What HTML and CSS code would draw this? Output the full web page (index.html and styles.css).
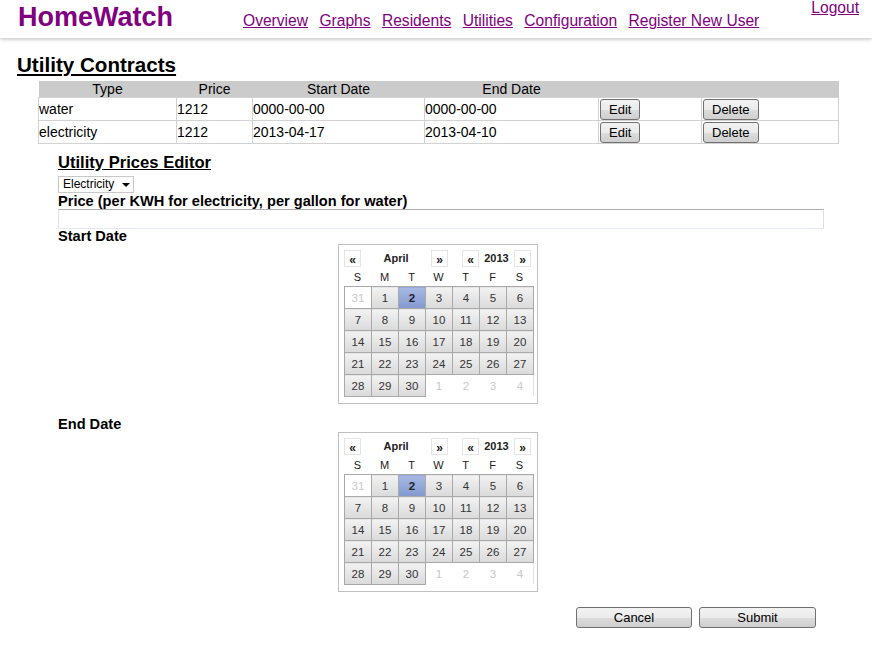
FILE: index.html
```html
<!DOCTYPE html>
<html>
<head>
<meta charset="utf-8">
<title>HomeWatch - Utilities</title>
<link rel="stylesheet" href="styles.css">
</head>
<body>
<header class="topbar">
  <div class="brand">HomeWatch</div>
  <nav class="nav">
    <a href="#">Overview</a>
    <a href="#">Graphs</a>
    <a href="#">Residents</a>
    <a href="#">Utilities</a>
    <a href="#">Configuration</a>
    <a href="#">Register New User</a>
  </nav>
  <a class="logout" href="#">Logout</a>
</header>

<main class="page">
  <h1 class="page-title">Utility Contracts</h1>
  <table class="contracts">
    <colgroup>
      <col class="c-type"><col class="c-price"><col class="c-start"><col class="c-end"><col class="c-edit"><col class="c-del">
    </colgroup>
    <thead>
      <tr><th>Type</th><th>Price</th><th>Start Date</th><th>End Date</th><th></th><th></th></tr>
    </thead>
    <tbody>
      <tr>
        <td>water</td><td>1212</td><td>0000-00-00</td><td>0000-00-00</td>
        <td><button class="btn">Edit</button></td><td><button class="btn">Delete</button></td>
      </tr>
      <tr>
        <td>electricity</td><td>1212</td><td>2013-04-17</td><td>2013-04-10</td>
        <td><button class="btn">Edit</button></td><td><button class="btn">Delete</button></td>
      </tr>
    </tbody>
  </table>

  <section class="editor">
    <h2 class="editor-title">Utility Prices Editor</h2>
    <div class="select"><span>Electricity</span><svg class="select-arrow" width="8" height="4" viewBox="0 0 8 4"><path d="M0 0H8L4 4Z" fill="#000"/></svg></div>
    <div class="field-label price-label">Price (per KWH for electricity, per gallon for water)</div>
    <input class="text-input" type="text">
    <div class="field-label">Start Date</div>

    <div class="calendar">
      <div class="cal-nav">
        <span class="cal-btn">«</span>
        <span class="cal-month">April</span>
        <span class="cal-btn">»</span>
        <span class="cal-spacer"></span>
        <span class="cal-btn">«</span>
        <span class="cal-year">2013</span>
        <span class="cal-btn">»</span>
      </div>
      <div class="cal-dow"><span>S</span><span>M</span><span>T</span><span>W</span><span>T</span><span>F</span><span>S</span></div>
      <table class="cal-grid">
        <tr><td class="other">31</td><td>1</td><td class="sel">2</td><td>3</td><td>4</td><td>5</td><td>6</td></tr>
        <tr><td>7</td><td>8</td><td>9</td><td>10</td><td>11</td><td>12</td><td>13</td></tr>
        <tr><td>14</td><td>15</td><td>16</td><td>17</td><td>18</td><td>19</td><td>20</td></tr>
        <tr><td>21</td><td>22</td><td>23</td><td>24</td><td>25</td><td>26</td><td>27</td></tr>
        <tr><td>28</td><td>29</td><td>30</td><td class="other next">1</td><td class="other next">2</td><td class="other next">3</td><td class="other next last">4</td></tr>
      </table>
    </div>

    <div class="field-label end-label">End Date</div>

    <div class="calendar">
      <div class="cal-nav">
        <span class="cal-btn">«</span>
        <span class="cal-month">April</span>
        <span class="cal-btn">»</span>
        <span class="cal-spacer"></span>
        <span class="cal-btn">«</span>
        <span class="cal-year">2013</span>
        <span class="cal-btn">»</span>
      </div>
      <div class="cal-dow"><span>S</span><span>M</span><span>T</span><span>W</span><span>T</span><span>F</span><span>S</span></div>
      <table class="cal-grid">
        <tr><td class="other">31</td><td>1</td><td class="sel">2</td><td>3</td><td>4</td><td>5</td><td>6</td></tr>
        <tr><td>7</td><td>8</td><td>9</td><td>10</td><td>11</td><td>12</td><td>13</td></tr>
        <tr><td>14</td><td>15</td><td>16</td><td>17</td><td>18</td><td>19</td><td>20</td></tr>
        <tr><td>21</td><td>22</td><td>23</td><td>24</td><td>25</td><td>26</td><td>27</td></tr>
        <tr><td>28</td><td>29</td><td>30</td><td class="other next">1</td><td class="other next">2</td><td class="other next">3</td><td class="other next last">4</td></tr>
      </table>
    </div>

    <div class="actions">
      <button class="btn btn-cancel">Cancel</button>
      <button class="btn btn-submit">Submit</button>
    </div>
  </section>
</main>
</body>
</html>
```

FILE: styles.css
```css
* { box-sizing: border-box; }

body {
  margin: 0;
  font-family: "Liberation Sans", Arial, sans-serif;
  color: #000;
  background: #fff;
}

/* ---------- top bar ---------- */
.topbar {
  position: relative;
  display: flex;
  align-items: baseline;
  height: 38px;
  padding: 2px 13px 0 18px;
  background: #fff;
  box-shadow: 0 1px 4px rgba(0, 0, 0, 0.28);
}

.brand {
  width: 225px;
  font-size: 27px;
  line-height: 31px;
  font-weight: bold;
  color: #800080;
}

.nav {
  display: flex;
  gap: 11.4px;
}

.nav a {
  font-size: 15.6px;
  color: #800080;
}

.logout {
  margin-left: auto;
  align-self: flex-start;
  margin-top: -2px;
  font-size: 15.6px;
  line-height: 16px;
  color: #800080;
}

/* ---------- contracts ---------- */
.page-title {
  margin: 15px 0 4px 17px;
  font-size: 20.6px;
  line-height: 24px;
  font-weight: bold;
  text-decoration: underline;
}

.contracts {
  margin-left: 38px;
  width: 800px;
  border-collapse: collapse;
  table-layout: fixed;
  font-size: 14px;
}

.c-type { width: 138px; }
.c-price { width: 76px; }
.c-start { width: 172px; }
.c-end { width: 174px; }
.c-edit { width: 103px; }
.c-del { width: 137px; }

.contracts th {
  background: #cbcbcb;
  font-weight: normal;
  line-height: 16px;
  height: 16px;
  padding: 0;
}

.contracts td {
  border: 1px solid #d2d2d2;
  padding: 0 1px 0 0;
  height: 23px;
  line-height: 16px;
}

.contracts td .btn { margin-left: 1px; }

.btn {
  height: 21px;
  padding: 0 8px;
  border: 1px solid #707070;
  border-radius: 3px;
  background: linear-gradient(#f2f2f2 0%, #ebebeb 50%, #dddddd 51%, #cfcfcf 100%);
  font-family: "Liberation Sans", Arial, sans-serif;
  font-size: 13px;
  color: #000;
  vertical-align: middle;
}

/* ---------- editor ---------- */
.editor {
  margin: 9px 0 0 58px;
  width: 766px;
}

.editor-title {
  margin: 0 0 3px;
  font-size: 16.6px;
  line-height: 20px;
  font-weight: bold;
  text-decoration: underline;
}

.select {
  display: flex;
  align-items: center;
  width: 76px;
  height: 17px;
  padding-left: 4px;
  border: 1px solid #c8c8c8;
  background: #fff;
  font-size: 12px;
  line-height: 15px;
}

.select-arrow {
  margin-left: auto;
  margin-right: 3px;
}

.field-label {
  font-size: 14.6px;
  font-weight: bold;
  line-height: 15px;
}

.price-label { margin-top: 1px; }
.end-label { margin-top: 13px; }

.text-input {
  display: block;
  width: 766px;
  height: 20px;
  margin: 0;
  border: 1px solid;
  border-color: #abadb3 #dbdfe6 #e3e9ef #e2e3ea;
  background: #fff;
}

/* ---------- calendar ---------- */
.calendar {
  margin-left: 280px;
  width: 200px;
  height: 160px;
  padding: 5px 3px 0 5px;
  border: 1px solid #c0c0c0;
  background: #fff;
}

.cal-nav {
  display: flex;
  align-items: flex-start;
  height: 18px;
  font-size: 11px;
  font-weight: bold;
  color: #222;
}

.cal-btn {
  display: flex;
  align-items: flex-end;
  justify-content: center;
  width: 17px;
  height: 17px;
  border: 1px solid #e4e4e4;
  font-size: 12px;
  line-height: 12px;
}

.cal-month {
  width: 70px;
  text-align: center;
  line-height: 17px;
}

.cal-spacer { width: 14px; }

.cal-year {
  width: 35px;
  text-align: center;
  line-height: 17px;
}

.cal-dow {
  display: grid;
  grid-template-columns: repeat(7, 27px);
  height: 18px;
  padding-top: 1px;
  font-size: 11px;
  line-height: 17px;
  text-align: center;
  color: #222;
}

.cal-grid {
  border-collapse: collapse;
  table-layout: fixed;
  width: 190px;
}

.cal-grid td {
  width: 27px;
  height: 22px;
  padding: 0;
  border: 1px solid #a9a9a9;
  text-align: center;
  font-size: 11.5px;
  color: #333;
  background: linear-gradient(#f2f2f2, #dadada);
}

.cal-grid td.sel {
  background: linear-gradient(#a8b9e3, #8298cf);
  font-weight: bold;
  color: #222;
}

.cal-grid td.other {
  background: #fff;
  color: #c8c8c8;
}

.cal-grid td.next { border-color: #fff; }
.cal-grid td.last { border-right-color: #e2e2e2; }

/* ---------- actions ---------- */
.actions {
  display: flex;
  justify-content: flex-end;
  gap: 7px;
  margin-top: 15px;
  padding-right: 8px;
}

.btn-cancel { width: 116px; }
.btn-submit { width: 117px; }
```
